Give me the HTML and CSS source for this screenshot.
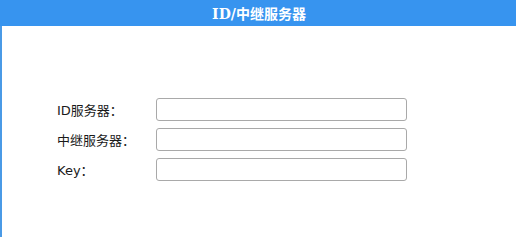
FILE: index.html
```html
<!DOCTYPE html>
<html>
<head>
<meta charset="utf-8">
<link rel="stylesheet" href="styles.css">
</head>
<body>
<div class="panel">
  <div class="header">ID/中继服务器</div>
  <div class="content">
    <div class="row"><label class="label">ID服务器：</label><input class="field" type="text"></div>
    <div class="row"><label class="label">中继服务器：</label><input class="field" type="text"></div>
    <div class="row"><label class="label">Key：</label><input class="field" type="text"></div>
  </div>
</div>
</body>
</html>
```
FILE: styles.css
```css
html, body {
  margin: 0;
  padding: 0;
  background: #fff;
}
.panel {
  width: 516px;
  height: 237px;
  box-sizing: border-box;
  border-left: 2px solid #4a9ae6;
  background: #fff;
}
.header {
  height: 26px;
  margin-left: -2px;
  background: #3794ef;
  color: #fff;
  font: bold 14px "DejaVu Serif", "Noto Sans CJK SC", serif;
  display: flex;
  align-items: center;
  justify-content: center;
  padding-left: 2px;
}
.content {
  padding: 72px 0 0 55px;
  display: flex;
  flex-direction: column;
  gap: 7px;
}
.row {
  display: flex;
  align-items: center;
  height: 23px;
}
.label {
  width: 99px;
  font: 13px "DejaVu Sans", "Noto Sans CJK SC", sans-serif;
  color: #1a1a1a;
}
.field {
  width: 251px;
  height: 23px;
  box-sizing: border-box;
  border: 1px solid #a9a9a9;
  border-radius: 3px;
  margin: 0;
  padding: 0 4px;
  background: #fff;
  outline: none;
}
```
